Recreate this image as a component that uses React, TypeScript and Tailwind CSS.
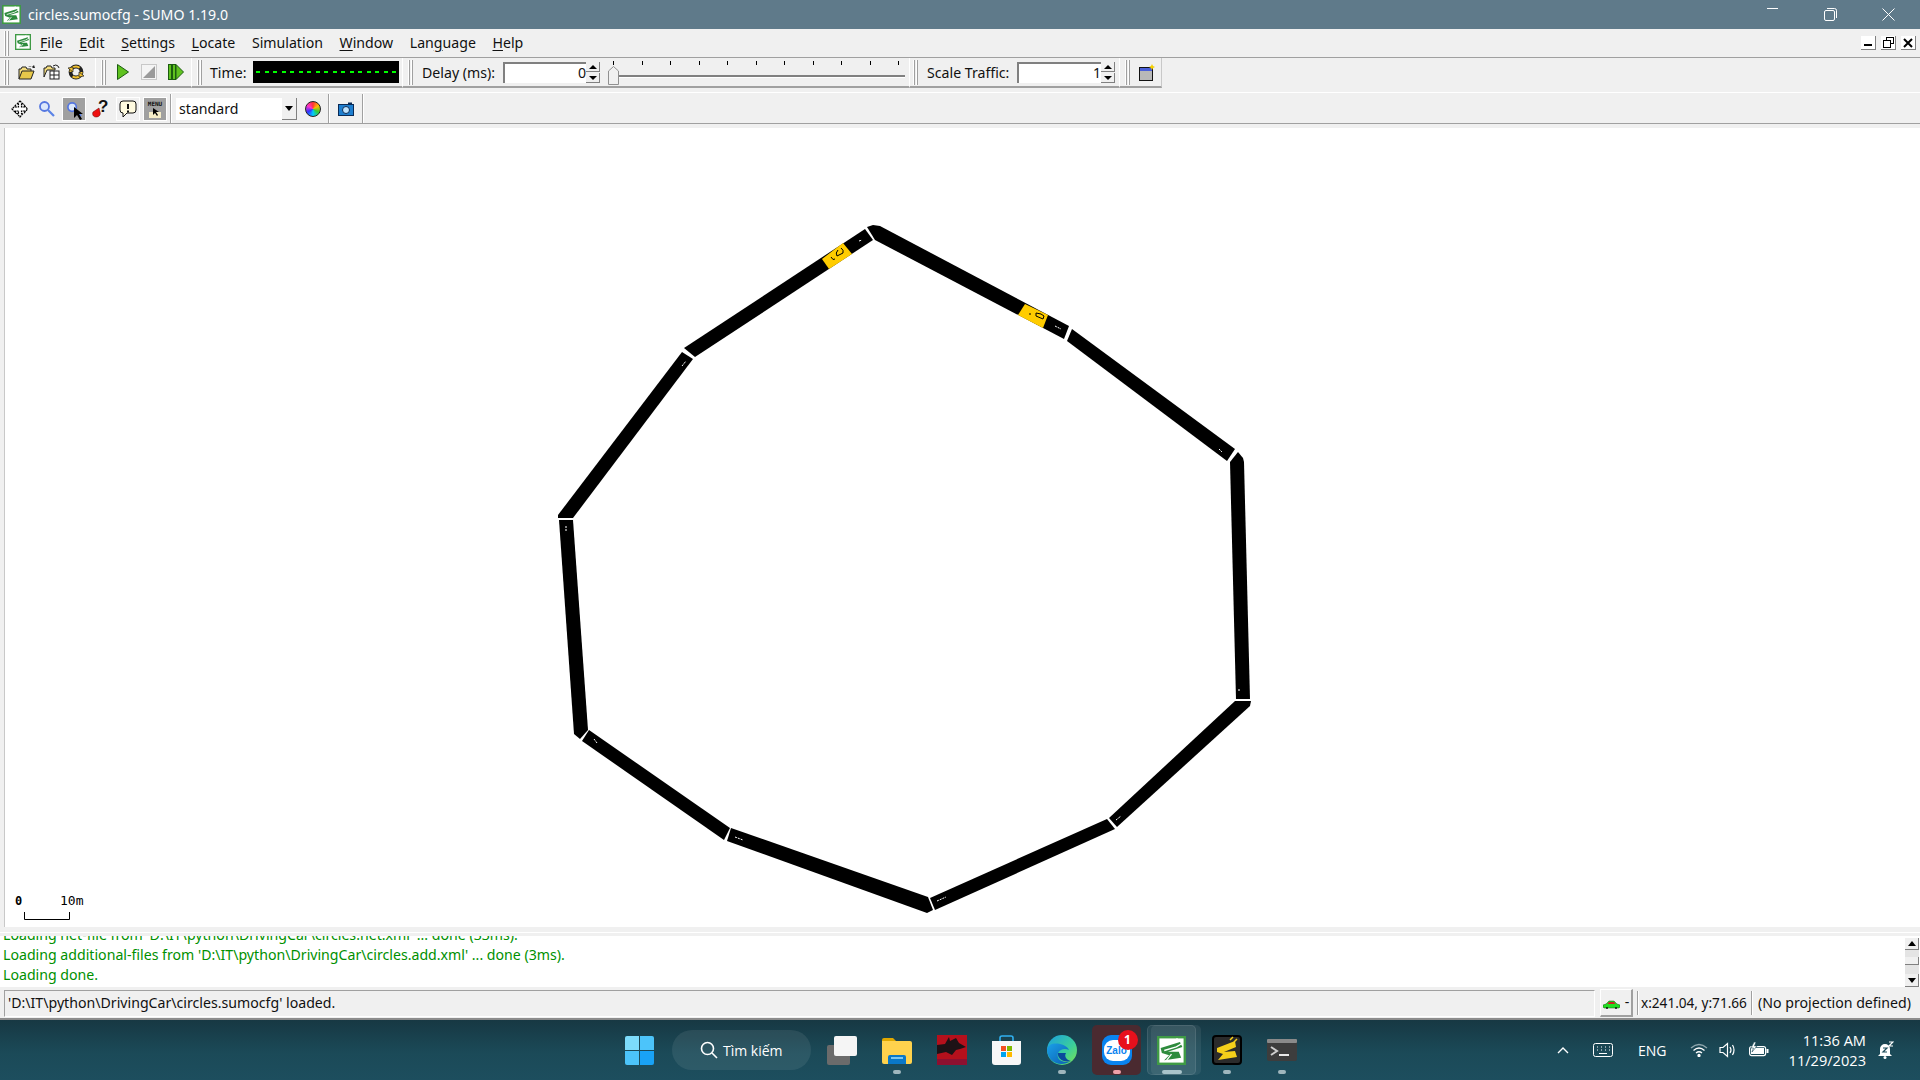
import { ReactNode } from "react";

const roads = [
  "684,348 695,357 873,240 865,229",
  "867,227 873,225 880,226 1069,326 1064,339 875,240",
  "1072,329 1235,449 1227,461 1067,341",
  "1238,452 1243,458 1244,462 1250,699 1236,699 1230,462",
  "1235,701 1251,701 1250,706 1117,827 1109,818",
  "1107,819 1115,829 935,910 930,898",
  "731,828 928,897 933,910 927,913 727,841",
  "589,730 730,828 724,840 582,741",
  "559,520 573,520 588,730 580,739 574,734",
  "682,352 693,359 573,518 558,518 558,515",
];

const yellow = ["822,259 843,243 852,254 829,269", "1025,304 1048,315 1043,328 1018,315"];

const marks = [
  [859, 241, 862, 240], [1055, 326, 1061, 329], [1219, 449, 1222, 452], [1238, 690, 1241, 690],
  [1116, 820, 1121, 816], [937, 901, 946, 897], [735, 837, 743, 840], [594, 739, 597, 743],
  [566, 526, 566, 532], [682, 366, 686, 361],
];

const menus: [string, string, string][] = [
  ["", "F", "ile"],
  ["", "E", "dit"],
  ["", "S", "ettings"],
  ["", "L", "ocate"],
  ["Simulation", "", ""],
  ["", "W", "indow"],
  ["Lan", "g", "uage"],
  ["", "H", "elp"],
];

const SumoLogo = ({ size = 18 }: { size?: number }) => (
  <svg width={size} height={size} viewBox="0 0 24 24">
    <rect x="1" y="1" width="22" height="22" fill="#fff" stroke="#3f9a45" strokeWidth="2" />
    <path d="M3 10 L19 5 L21 9 L9 13 L18 13 L20 18 L6 20 L10 16 L4 14Z" fill="#2e8b3d" />
    <path d="M13 5 L17 2 M16 9 L21 6 M8 20 L12 15 M6 12 L16 9" stroke="#fff" strokeWidth="1.100" />
  </svg>
);

const Grip = () => (
  <div className="flex h-[25px] w-[6px] shrink-0 gap-[1px]">
    <div className="w-[2px] border-l border-r border-l-white border-r-[#a0a0a0]" />
    <div className="w-[2px] border-l border-r border-l-white border-r-[#a0a0a0]" />
  </div>
);

const Sep = ({ className = "" }: { className?: string }) => (
  <div className={`w-[2px] shrink-0 self-stretch border-l border-r border-l-[#a0a0a0] border-r-white ${className}`} />
);

const FolderIcon = () => (
  <svg width="17" height="15" viewBox="0 0 17 15">
    <path d="M1 14V4h2l1-2h4l1 2h4v2" fill="#f3dc7c" stroke="#222" />
    <path d="M1 14l3-8h12l-3 8Z" fill="#e7c84a" stroke="#222" />
    <path d="M10 2q3-2 5 0l-1 1 3 0-1-3-1 1" fill="#222" />
  </svg>
);

const OpenNetIcon = () => (
  <svg width="17" height="16" viewBox="0 0 17 16">
    <path d="M1 13V4h2l1-2h4l1 2h3v2H4l-3 7Z" fill="#f3dc7c" stroke="#222" />
    <rect x="7" y="7" width="9" height="8" fill="#fff" stroke="#222" />
    <path d="M7 11h9M11 7v8" stroke="#222" />
    <path d="M10 2q3-2 5 0l1 2" fill="none" stroke="#222" />
  </svg>
);

const ReloadIcon = () => (
  <svg width="16" height="16" viewBox="0 0 16 16">
    <circle cx="8" cy="8" r="5.500" fill="none" stroke="#222" strokeWidth="3.800" />
    <circle cx="8" cy="8" r="5.500" fill="none" stroke="#f2c230" strokeWidth="2.200" strokeDasharray="12 5" />
    <path d="M0 4l5-1 0 5Z" fill="#f2c230" stroke="#222" strokeWidth=".7" />
    <path d="M16 12l-5 1 0-5Z" fill="#f2c230" stroke="#222" strokeWidth=".7" />
  </svg>
);

const PlayIcon = () => (
  <svg width="12" height="16" viewBox="0 0 12 16">
    <path d="M.5.5 11.500 8 .5 15.500Z" fill="#5fc21f" stroke="#1c5c10" />
  </svg>
);

const StopIcon = () => (
  <svg width="16" height="16" viewBox="0 0 16 16">
    <rect x=".5" y=".5" width="15" height="15" fill="#f4f4f4" stroke="#c8c8c8" />
    <path d="M14 2V14H2Z" fill="#9a9a9a" />
  </svg>
);

const StepIcon = () => (
  <svg width="16" height="16" viewBox="0 0 16 16">
    <rect x=".5" y=".5" width="3" height="15" fill="#5fc21f" stroke="#1c5c10" />
    <rect x="4.500" y=".5" width="3" height="15" fill="#5fc21f" stroke="#1c5c10" />
    <path d="M8 .5 15.500 8 8 15.500Z" fill="#5fc21f" stroke="#1c5c10" />
  </svg>
);

const MoveIcon = () => (
  <svg width="18" height="18" viewBox="0 0 18 18">
    <path
      d="M9 1l3 3-1.500 0v3h3V5.500l3 3.500-3 3.500V11h-3v2.500H12L9 17l-3-3.500h1.500V11h-3v1.500L1 9l3.500-3.500V7h3V4H6Z"
      fill="#fff"
      stroke="#000"
      strokeWidth="1.200"
      strokeDasharray="2 .6"
    />
  </svg>
);

const LensIcon = ({ size = 17 }: { size?: number }) => (
  <svg width={size} height={size} viewBox="0 0 17 17">
    <circle cx="6.500" cy="6.500" r="4.500" fill="#dce8fb" stroke="#5577e0" strokeWidth="1.800" />
    <path d="M10 10l6 6" stroke="#5b83e6" strokeWidth="2.200" />
  </svg>
);

const HelpIcon = () => (
  <svg width="16" height="20" viewBox="0 0 16 20">
    <path d="M7 9 1 13c-1 2 0 5 3 5s5-2 4-5Z" fill="#ee1111" stroke="#600" strokeWidth=".5" />
    <text x="6" y="13" fontFamily="'Liberation Sans', sans-serif" fontWeight="700" fontSize="17" fill="#111">?</text>
  </svg>
);

const ButtonFrame = ({ active, children, w = "w-[24px]" }: { active?: boolean; children: ReactNode; w?: string }) => (
  <div
    className={`flex h-[24px] ${w} shrink-0 items-center justify-center ${
      active ? "border border-white bg-[#a0a0a0]" : ""
    }`}
  >
    {children}
  </div>
);

const Spinner = () => (
  <div className="mt-[1px] flex h-[21px] w-[14px] shrink-0 flex-col gap-[1px]">
    <div className="flex h-[10px] items-center justify-center border-r border-b border-r-[#808080] border-b-[#808080] bg-[#f0f0f0]">
      <div className="h-0 w-0 border-x-[4px] border-b-[4px] border-x-transparent border-b-black" />
    </div>
    <div className="flex h-[10px] items-center justify-center border-r border-b border-r-[#808080] border-b-[#808080] bg-[#f0f0f0]">
      <div className="h-0 w-0 border-x-[4px] border-t-[4px] border-x-transparent border-t-black" />
    </div>
  </div>
);

const NumberInput = ({ value, w }: { value: string; w: string }) => (
  <div className={`mt-[1px] flex h-[21px] ${w} shrink-0 items-center justify-end border-t-2 border-l-2 border-t-[#808080] border-l-[#808080] bg-white leading-none`}>
    {value}
  </div>
);

const SmallMdiButton = ({ children }: { children: ReactNode }) => (
  <div className="flex h-[14px] w-[15px] items-center justify-center border-r border-b border-r-[#808080] border-b-[#808080] bg-white">
    {children}
  </div>
);

const TaskItem = ({ children, dot = "", active = false, tint = "" }: { children: ReactNode; dot?: string; active?: boolean; tint?: string }) => (
  <div className="relative flex h-[60px] w-[55px] shrink-0 items-center justify-center">
    {tint && <div className={`absolute top-[5px] left-[3px] h-[50px] w-[49px] rounded-[5px] ${tint}`} />}
    {active && (
      <>
        <div className="absolute top-[5px] left-[7px] h-[50px] w-[50px] rounded-[5px] bg-[#ffffff12]" />
        <div className="absolute top-[5px] left-[3px] h-[50px] w-[49px] rounded-[5px] border border-[#ffffff18] bg-[#ffffff14]" />
      </>
    )}
    <div className="relative flex items-center justify-center">{children}</div>
    {dot && <div className={`absolute bottom-[6px] left-1/2 h-[4px] -translate-x-1/2 rounded-full ${dot}`} />}
  </div>
);

const App = () => {
  return (
    <div className="flex h-[1080px] w-[1920px] flex-col overflow-hidden bg-[#f0f0f0] font-['Noto_Sans',sans-serif] text-[14.15px] text-[#111]">
      {/* title bar */}
      <div className="flex h-[29px] shrink-0 items-center bg-[#5f7a8a] text-white">
        <div className="ml-[2px] mr-[7px]"><SumoLogo size={19} /></div>
        <span>circles.sumocfg - SUMO 1.19.0</span>
        <div className="ml-auto flex pr-[3px]">
          <div className="flex w-[58px] justify-center">
            <div className="h-[1px] w-[11px] bg-white" />
          </div>
          <div className="flex w-[58px] justify-center">
            <svg width="13" height="13" viewBox="0 0 13 13" fill="none" stroke="#fff">
              <rect x=".5" y="2.500" width="10" height="10" rx="1.500" />
              <path d="M3 .5h7.500a2 2 0 0 1 2 2V10" />
            </svg>
          </div>
          <div className="flex w-[58px] justify-center">
            <svg width="13" height="13" viewBox="0 0 13 13" stroke="#fff"><path d="M.5.5l12 12M12.500.5l-12 12" /></svg>
          </div>
        </div>
      </div>

      {/* menu bar */}
      <div className="flex h-[28px] shrink-0 items-center">
        <div className="ml-[4px] mr-[5px]"><Grip /></div>
        <div className="mb-[3px] mr-[9px]"><SumoLogo size={16} /></div>
        <div className="flex gap-[16.6px]">
          {menus.map(([pre, u, post]) => (
            <span key={pre + u + post}>
              {pre}
              {u && <u className="underline-offset-2">{u}</u>}
              {post}
            </span>
          ))}
        </div>
        <div className="ml-auto flex gap-[5px] pr-[4px]">
          <SmallMdiButton><div className="mt-[5px] h-[2px] w-[8px] bg-black" /></SmallMdiButton>
          <SmallMdiButton>
            <svg width="11" height="11" viewBox="0 0 11 11" fill="#fff" stroke="#000">
              <rect x="3.500" y=".5" width="7" height="6" />
              <rect x=".5" y="3.500" width="7" height="7" />
            </svg>
          </SmallMdiButton>
          <SmallMdiButton>
            <svg width="10" height="10" viewBox="0 0 10 10" stroke="#000" strokeWidth="2"><path d="M1 1l8 8M9 1l-8 8" /></svg>
          </SmallMdiButton>
        </div>
      </div>

      {/* simulation toolbar */}
      <div className="flex h-[31px] shrink-0 items-stretch border-t border-[#a0a0a0]">
        <div className="flex w-[96px] items-center border-r border-b-2 border-r-white border-b-[#a0a0a0] pl-[4px]">
          <Grip />
          <div className="ml-[8px] flex w-[72px] items-center justify-between pr-[6px]">
            <FolderIcon />
            <OpenNetIcon />
            <ReloadIcon />
          </div>
        </div>
        <div className="flex w-[96px] items-center border-r border-b-2 border-r-white border-b-[#a0a0a0] pl-[5px]">
          <Grip />
          <div className="ml-[10px] flex w-[67px] items-center justify-between">
            <PlayIcon />
            <StopIcon />
            <StepIcon />
          </div>
        </div>
        <div className="flex w-[211px] items-center border-r border-b-2 border-r-white border-b-[#a0a0a0] pl-[5px]">
          <Grip />
          <span className="ml-[7px] mt-[2px] w-[43px]">Time:</span>
          <div className="flex h-[22px] w-[146px] items-center justify-between bg-black px-[3px]">
            {Array.from({ length: 17 }).map((_, i) => (
              <div key={i} className="h-[2px] w-[4px] bg-[#00ff00]" />
            ))}
          </div>
        </div>
        <div className="flex w-[507px] items-center border-r border-b-2 border-r-white border-b-[#a0a0a0] pl-[5px]">
          <Grip />
          <span className="ml-[8px] mt-[2px] w-[81px] whitespace-nowrap">Delay (ms):</span>
          <NumberInput value="0" w="w-[83px]" />
          <Spinner />
          <div className="relative ml-[6px] h-[26px] w-[299px]">
            <div className="ml-[7px] mt-[2px] flex justify-between pr-[6px]">
              {Array.from({ length: 11 }).map((_, i) => (
                <div key={i} className="h-[4px] w-[1px] bg-black" />
              ))}
            </div>
            <div className="mt-[10px] ml-[12px] h-[3px] border-t-2 border-b border-t-[#808080] border-b-white" />
            <svg className="absolute top-[7px] left-[2px]" width="11" height="19" viewBox="0 0 11 19">
              <path d="M.5 18.500V5L5.500.5 10.500 5V18.500Z" fill="#f0f0f0" stroke="#909090" />
            </svg>
          </div>
        </div>
        <div className="flex w-[210px] items-center border-r border-b-2 border-r-white border-b-[#a0a0a0] pl-[3px]">
          <Grip />
          <span className="ml-[8px] mt-[2px] w-[90px] whitespace-nowrap">Scale Traffic:</span>
          <NumberInput value="1" w="w-[84px]" />
          <Spinner />
        </div>
        <div className="flex w-[42px] items-center border-r border-b-2 border-r-[#c8c8c8] border-b-[#a0a0a0] pl-[5px]">
          <Grip />
          <svg className="ml-[8px]" width="16" height="17" viewBox="0 0 16 17">
            <rect x=".5" y="3.500" width="13" height="13" fill="#b8b8b8" stroke="#111" />
            <rect x="1" y="4" width="12" height="3" fill="#4a5fd8" />
            <path d="M13 0l1 2 2 1-2 1-1 2-1-2-2-1 2-1Z" fill="#f5d000" />
          </svg>
        </div>
      </div>

      {/* view toolbar */}
      <div className="flex h-[37px] shrink-0 flex-col">
        <div className="mt-[4px] flex h-[32px] items-center border-t border-b border-t-white border-b-[#a0a0a0] pl-[8px] pt-[1px]">
          <ButtonFrame><MoveIcon /></ButtonFrame>
          <div className="ml-[2px]"><ButtonFrame><LensIcon /></ButtonFrame></div>
          <div className="ml-[4px]">
            <ButtonFrame active>
              <div className="relative">
                <LensIcon size={16} />
                <svg className="absolute top-[6px] left-[7px]" width="11" height="13" viewBox="0 0 11 13"><path d="M1 0v11l3-3 3 5 2-1-3-5h4Z" fill="#000" /></svg>
              </div>
            </ButtonFrame>
          </div>
          <div className="ml-[2px]"><ButtonFrame><HelpIcon /></ButtonFrame></div>
          <div className="ml-[4px] flex h-[24px] w-[24px] items-center justify-center border border-white">
            <svg width="18" height="18" viewBox="0 0 18 18">
              <path d="M4 1h10a3 3 0 0 1 3 3v6a3 3 0 0 1-3 3H8l-4 4v-4a3 3 0 0 1-3-3V4a3 3 0 0 1 3-3Z" fill="#fffbe0" stroke="#111" />
              <path d="M9 4v5M9 10.500v2" stroke="#111" strokeWidth="2" />
            </svg>
          </div>
          <div className="ml-[3px]">
            <ButtonFrame active>
              <svg width="20" height="20" viewBox="0 0 20 20">
                <rect x="4" y="13" width="12" height="6" fill="#f5edc8" />
                <path d="M8 9v7l2-2 2 3 1-1-2-3h3Z" fill="#000" />
                <text x="10" y="7" textAnchor="middle" fontFamily="'DejaVu Sans Mono', monospace" fontWeight="700" fontSize="6" fill="#111">MENU</text>
              </svg>
            </ButtonFrame>
          </div>
          <Sep className="ml-[3px]" />
          <div className="ml-[4px] flex h-[22px] w-[121px] items-stretch bg-white">
            <span className="flex-1 pl-[3px] leading-[22px]">standard</span>
            <div className="flex w-[15px] items-center justify-center border-r border-b border-r-[#808080] border-b-[#808080] bg-[#f0f0f0]">
              <div className="h-0 w-0 border-x-[4px] border-t-[5px] border-x-transparent border-t-black" />
            </div>
          </div>
          <div className="ml-[8px] h-[16px] w-[16px] rounded-full border border-[#222] bg-[conic-gradient(#f33,#fb0,#3c3,#0cf,#33f,#f3c,#f33)]" />
          <Sep className="ml-[7px]" />
          <svg className="ml-[8px]" width="16" height="14" viewBox="0 0 16 14">
            <rect x=".5" y="2.500" width="15" height="11" fill="#1e7fd0" stroke="#0a2a55" />
            <circle cx="8" cy="8" r="3.500" fill="#bfe4ff" stroke="#0a2a55" />
            <rect x="10" y=".5" width="4" height="2" fill="#0a2a55" />
          </svg>
          <Sep className="ml-[8px]" />
        </div>
      </div>

      {/* network canvas */}
      <div className="mt-[3px] ml-[4px] h-[799px] shrink-0 border-l border-[#c8c8c8] bg-white">
        <svg width="1915" height="799" viewBox="5 128 1915 799">
          {roads.map((points) => (
            <polygon key={points} points={points} fill="#000" />
          ))}
          {yellow.map((points) => (
            <polygon key={points} points={points} fill="#ffcc00" />
          ))}
          {marks.map(([x1, y1, x2, y2]) => (
            <line key={x1} x1={x1} y1={y1} x2={x2} y2={y2} stroke="#fff" strokeWidth="1" strokeDasharray="2 1" />
          ))}
          <path d="M831 257q2 4 4 2M838 250q-3 3-1 6l6-3q1-3-2-5" fill="none" stroke="#000" strokeWidth="1" />
          <path d="M1030 313l0 2M1036 313l0 3 7 3 1-3-3-2-5-1" fill="none" stroke="#000" strokeWidth="1" />
          <text x="15" y="905" fontFamily="'DejaVu Sans Mono', monospace" fontWeight="700" fontSize="12" fill="#000">0</text>
          <text x="60" y="905" fontFamily="'DejaVu Sans Mono', monospace" fontSize="13" fill="#000">10m</text>
          <path d="M24.500 912v7.500h45V912" fill="none" stroke="#000" />
        </svg>
      </div>

      <div className="mt-[5px] h-[1px] shrink-0 bg-white" />
      <div className="h-[3px] shrink-0" />

      {/* message window */}
      <div className="flex h-[51px] shrink-0 bg-white">
        <div className="flex flex-1 flex-col justify-end overflow-hidden pb-[2px] pl-[3px] leading-[20px] text-[#009000]">
          <div className="whitespace-nowrap">Loading net-file from 'D:\IT\python\DrivingCar\circles.net.xml' ... done (33ms).</div>
          <div className="whitespace-nowrap">Loading additional-files from 'D:\IT\python\DrivingCar\circles.add.xml' ... done (3ms).</div>
          <div className="whitespace-nowrap">Loading done.</div>
        </div>
        <div className="mr-[1px] mt-[2px] flex w-[14px] flex-col bg-[#e4e4e4]">
          <div className="flex h-[12px] items-center justify-center border-r border-b border-r-[#808080] border-b-[#808080] bg-[#f0f0f0]">
            <div className="h-0 w-0 border-x-[4px] border-b-[5px] border-x-transparent border-b-black" />
          </div>
          <div className="mt-[7px] h-[8px] border-r border-b border-r-[#808080] border-b-[#808080] bg-[#f0f0f0]" />
          <div className="mt-auto flex h-[13px] items-center justify-center border-r border-b border-r-[#808080] border-b-[#808080] bg-[#f0f0f0]">
            <div className="h-0 w-0 border-x-[4px] border-t-[5px] border-x-transparent border-t-black" />
          </div>
        </div>
      </div>

      {/* status bar */}
      <div className="flex h-[33px] shrink-0 items-center border-b-2 border-[#8c8c8c] pt-[1px]">
        <div className="ml-[4px] flex h-[27px] w-[1591px] items-center border border-t-[#a0a0a0] border-l-[#a0a0a0] border-r-white border-b-white pl-[3px]">
          'D:\IT\python\DrivingCar\circles.sumocfg' loaded.
        </div>
        <div className="ml-[5px] flex h-[28px] w-[33px] items-center justify-center gap-[5px] border-t border-r-2 border-b-2 border-l border-t-white border-r-[#a0a0a0] border-b-[#a0a0a0] border-l-white">
          <svg className="mt-[4px]" width="17" height="9" viewBox="0 0 17 9">
            <path d="M0 7V5l3-1 3-3h5l3 3 3 1v2l-1 1H1Z" fill="#22dd22" stroke="#0a5a0a" strokeWidth=".5" />
            <path d="M6 2h5l1.500 2h-8Z" fill="#cc2222" />
            <circle cx="4" cy="8" r="1" fill="#111" />
            <circle cx="13" cy="8" r="1" fill="#111" />
          </svg>
          <span className="leading-none">-</span>
        </div>
        <Sep className="my-[3px] ml-[4px]" />
        <span className="ml-[2px] w-[109px] whitespace-nowrap text-[13.6px]">x:241.04, y:71.66</span>
        <Sep className="my-[3px] ml-[1px]" />
        <span className="ml-[2px] whitespace-nowrap pl-[3px]">(No projection defined)</span>
      </div>

      {/* windows taskbar */}
      <div className="flex h-[60px] shrink-0 items-center bg-[linear-gradient(180deg,#173843,#1b4a58_55%,#1d4e5e)] pl-[612px] font-['Open_Sans',sans-serif] text-white">
        <TaskItem>
          <div className="grid h-[29px] w-[29px] grid-cols-2 gap-[1px]">
            <div className="rounded-tl-[2px] bg-[#7ddcfb]" />
            <div className="rounded-tr-[2px] bg-[#4cc4fa]" />
            <div className="rounded-bl-[2px] bg-[#4cc4fa]" />
            <div className="rounded-br-[2px] bg-[#19a2f5]" />
          </div>
        </TaskItem>
        <div className="ml-[5px] mr-[3px] flex h-[40px] w-[139px] shrink-0 items-center rounded-full bg-[#ffffff14] pl-[28px] text-[14px]">
          <svg width="18" height="18" viewBox="0 0 18 18" fill="none" stroke="#fff" strokeWidth="1.600">
            <circle cx="7.500" cy="7.500" r="6" />
            <path d="M12 12l5 5" />
          </svg>
          <span className="ml-[5px] whitespace-nowrap">Tìm kiếm</span>
        </div>
        <TaskItem>
          <div className="relative h-[29px] w-[30px]">
            <div className="absolute bottom-0 left-0 h-[20px] w-[23px] rounded-[2px] bg-[#6b6b6b]" />
            <div className="absolute top-0 right-0 h-[20px] w-[23px] rounded-[2px] bg-[#f5f5f5]" />
          </div>
        </TaskItem>
        <TaskItem dot="w-[8px] bg-[#9fb6bd]">
          <svg width="30" height="27" viewBox="0 0 30 27">
            <path d="M0 3a2 2 0 0 1 2-2h9l3 3H0Z" fill="#e0a800" />
            <path d="M0 4h28a2 2 0 0 1 2 2v19a2 2 0 0 1-2 2H2a2 2 0 0 1-2-2Z" fill="#ffd24d" />
            <path d="M6 27v-7a2 2 0 0 1 2-2h14a2 2 0 0 1 2 2v7Z" fill="#0a78c8" />
            <rect x="9" y="20" width="12" height="2" fill="#7cc7f2" />
          </svg>
        </TaskItem>
        <TaskItem>
          <svg width="30" height="30" viewBox="0 0 30 30">
            <rect width="30" height="30" fill="#b5101c" />
            <path d="M0 10 8 9 12 2l1 4 6-3 3 5 7 4-6 2-4 1-4 5-6-3-9 2Z" fill="#1d1216" />
            <rect y="24" width="30" height="6" fill="#8d1030" />
          </svg>
        </TaskItem>
        <TaskItem>
          <svg width="29" height="30" viewBox="0 0 29 30">
            <path d="M8 7V3a2 2 0 0 1 2-2h9a2 2 0 0 1 2 2v4" fill="none" stroke="#30b0f0" strokeWidth="1.600" />
            <path d="M0 6h29v21a3 3 0 0 1-3 3H3a3 3 0 0 1-3-3Z" fill="#f7f7f7" />
            <rect x="9" y="11" width="5" height="5" fill="#f25022" />
            <rect x="15" y="11" width="5" height="5" fill="#7fba00" />
            <rect x="9" y="17" width="5" height="5" fill="#00a4ef" />
            <rect x="15" y="17" width="5" height="5" fill="#ffb900" />
          </svg>
        </TaskItem>
        <TaskItem dot="w-[8px] bg-[#9fb6bd]">
          <svg width="30" height="30" viewBox="0 0 30 30">
            <defs>
              <linearGradient id="edgeTop" x1="0" y1="0" x2="1" y2="1">
                <stop offset="0" stopColor="#1a9fe0" />
                <stop offset=".6" stopColor="#3ccf9a" />
                <stop offset="1" stopColor="#7fe34f" />
              </linearGradient>
              <linearGradient id="edgeLow" x1="0" y1="0" x2="1" y2="1">
                <stop offset="0" stopColor="#1aa0e8" />
                <stop offset="1" stopColor="#0c5cb0" />
              </linearGradient>
            </defs>
            <circle cx="15" cy="15" r="15" fill="url(#edgeTop)" />
            <path d="M0 15C1 27 13 33 24 26 15 29 9 24 11 18c2-4 7-5 11-3-3-7-21-10-22 0Z" fill="url(#edgeLow)" />
            <path d="M11 18c-1 5 5 10 13 8-5-1-7-5-5-8Z" fill="#0a4a9c" />
          </svg>
        </TaskItem>
        <TaskItem dot="w-[8px] bg-[#f0a0a8]" tint="bg-[#4a2a30]">
          <div className="relative flex h-[30px] w-[30px] items-center justify-center rounded-[9px] bg-[#0a84f0]">
            <div className="flex h-[21px] w-[26px] items-center justify-center rounded-[9px] bg-white font-['Liberation_Sans',sans-serif] text-[10px] font-bold text-[#0a84f0]">Zalo</div>
            <div className="absolute -top-[5px] -right-[6px] flex h-[20px] w-[20px] items-center justify-center rounded-full bg-[#e8101c] text-[12px] font-bold text-white">1</div>
          </div>
        </TaskItem>
        <TaskItem dot="w-[20px] bg-[#a9c4cb]" active>
          <SumoLogo size={29} />
        </TaskItem>
        <TaskItem dot="w-[8px] bg-[#9fb6bd]">
          <svg width="30" height="30" viewBox="0 0 30 30">
            <rect x="1" y="1" width="28" height="28" rx="3" fill="#2b2b2b" stroke="#000" strokeWidth="2" />
            <path d="M5 13 23 6l1 6-12 5 11-1 2 6-19 3 5-6-6-2Z" fill="#f5cf1a" />
            <path d="M18 5l3-3M22 7l3-3" stroke="#f5cf1a" strokeWidth="1.500" />
          </svg>
        </TaskItem>
        <TaskItem dot="w-[8px] bg-[#9fb6bd]">
          <svg width="30" height="22" viewBox="0 0 30 22">
            <rect width="30" height="22" rx="2" fill="#3d3d3d" />
            <rect width="30" height="4" rx="1" fill="#8a8a8a" />
            <path d="M4 8l6 4-6 4" fill="none" stroke="#cfcfcf" strokeWidth="2" />
            <rect x="12" y="15" width="10" height="2" fill="#e8e8e8" />
          </svg>
        </TaskItem>

        {/* tray */}
        <div className="ml-auto flex items-center pr-[26px]">
          <svg width="12" height="7" viewBox="0 0 12 7" fill="none" stroke="#fff" strokeWidth="1.400"><path d="M1 6l5-5 5 5" /></svg>
          <svg className="ml-[24px]" width="20" height="14" viewBox="0 0 20 14" fill="none" stroke="#fff">
            <rect x=".5" y=".5" width="19" height="13" rx="2" />
            <path d="M4 4h1M8 4h1M12 4h1M16 4h1M4 7h1M8 7h1M12 7h1M16 7h1M6 10.500h8" />
          </svg>
          <span className="ml-[25px] w-[30px] text-[14px]">ENG</span>
          <svg className="ml-[22px]" width="18" height="14" viewBox="0 0 18 14" fill="none" stroke="#fff" strokeWidth="1.300">
            <path d="M1 5q8-7 16 0" stroke="#8fa6ad" />
            <path d="M3.500 7.500q5.500-5 11 0M6 10q3-2.500 6 0" />
            <circle cx="9" cy="12.500" r="1" fill="#fff" />
          </svg>
          <svg className="ml-[11px]" width="19" height="16" viewBox="0 0 19 16" fill="none" stroke="#fff" strokeWidth="1.200">
            <path d="M1 5.500h3L8.500 1.500v13L4 10.500H1Z" />
            <path d="M11 5q2 3 0 6M13.500 3q3 5 0 10" />
          </svg>
          <svg className="ml-[11px]" width="20" height="16" viewBox="0 0 20 16">
            <rect x=".6" y="4.600" width="16" height="9" rx="2" fill="#1b4a58" stroke="#fff" strokeWidth="1.200" />
            <rect x="2" y="6" width="13" height="6" fill="#fff" />
            <rect x="17.500" y="7" width="2" height="4" fill="#fff" />
            <path d="M5 0 2 6h2.500L3 10l5-6H5.500L7 0Z" fill="#fff" stroke="#1b4a58" strokeWidth=".6" />
          </svg>
          <div className="ml-[17px] flex w-[80px] flex-col items-end text-[14.6px] leading-[20px]">
            <span className="whitespace-nowrap">11:36 AM</span>
            <span className="whitespace-nowrap">11/29/2023</span>
          </div>
          <svg className="ml-[11px]" width="17" height="18" viewBox="0 0 17 18">
            <path d="M3 13V8a5 5 0 0 1 10 0v5l2 2H1Z" fill="#fff" />
            <circle cx="8" cy="16.500" r="1.500" fill="#fff" />
            <path d="M6 7h4L6 11h4" fill="none" stroke="#1b4a58" strokeWidth="1.200" />
            <path d="M12 1h4l-4 4h4" fill="none" stroke="#fff" strokeWidth="1.200" />
          </svg>
        </div>
      </div>
    </div>
  );
};

export default App;
